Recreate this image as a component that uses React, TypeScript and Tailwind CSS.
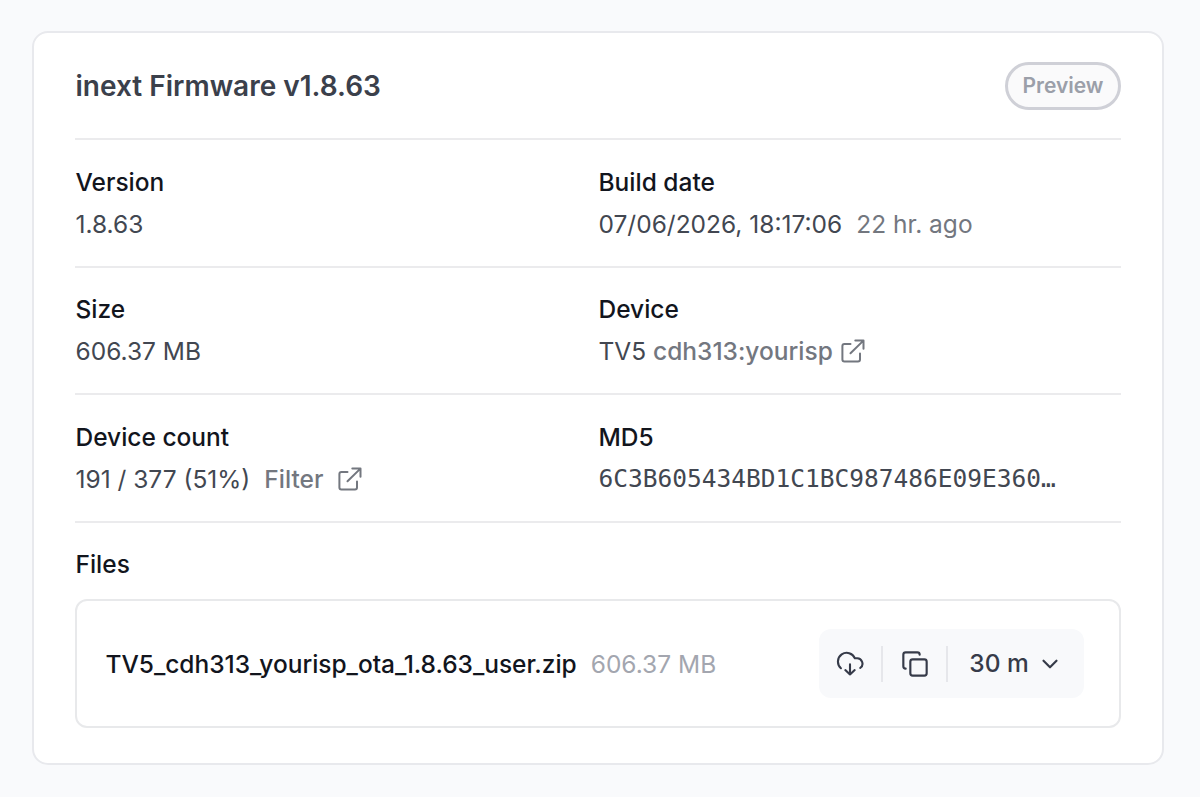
import type { ReactNode } from 'react'
import { ChevronDown, Copy } from 'lucide-react'

function ExternalLinkIcon({ className }: { className?: string }) {
  return (
    <svg
      className={className}
      viewBox="0 0 26 26"
      fill="none"
      stroke="currentColor"
      strokeWidth="2"
      strokeLinecap="round"
      strokeLinejoin="round"
    >
      <path d="M10.5 6H4.4a2 2 0 0 0-2 2v13.6a2 2 0 0 0 2 2H18a2 2 0 0 0 2-2v-6.1" />
      <path d="M10.5 15.2 23.4 2.6M15.3 2.5h8.2v8.2" />
    </svg>
  )
}

function CloudDownIcon({ className }: { className?: string }) {
  return (
    <svg
      className={className}
      viewBox="0 0 28 28"
      fill="none"
      stroke="currentColor"
      strokeWidth="2.1"
      strokeLinecap="round"
      strokeLinejoin="round"
    >
      <path d="M4.9 18.2A8.8 8.8 0 1 1 18.9 8.3h1.3A5.4 5.4 0 0 1 24.2 18" />
      <path d="M14 14.4v10M9.3 20.1l4.7 4.4 4.7-4.4" />
    </svg>
  )
}

function Field({ label, children }: { label: string; children: ReactNode }) {
  return (
    <div className="flex flex-col pl-[0.5px]">
      <dt className="h-[42px] font-medium leading-[36px] text-[#12151d]">{label}</dt>
      <dd className="flex h-[36px] items-center whitespace-pre leading-[36px] text-[#424751]">{children}</dd>
    </div>
  )
}

function Row({ children }: { children: ReactNode }) {
  return (
    <div className="grid h-[127.5px] grid-cols-2 border-t-2 border-[#ebebed] pt-[23.8px]">{children}</div>
  )
}

export default function App() {
  return (
    <main className="h-[797px] w-[1200px] bg-[#f9fafc] pl-8 pt-[31px] font-['Inter',sans-serif] text-[24.5px]">
      <section className="h-[734px] w-[1132px] rounded-2xl border-2 border-[#e8e9ed] bg-white pl-[41px] pr-[41px]">
        {/* Header */}
        <header className="flex h-[105px] items-center justify-between">
          <h1 className="pl-[0.5px] text-[28px] font-semibold leading-10 text-[#3b404b]">inext Firmware v1.8.63</h1>
          <span className="flex h-12 w-[116px] items-center justify-center rounded-full border-[3px] border-[#cfd0d7] bg-[#fafafb] text-[21px] font-semibold text-[#9b9fa9]">
            Preview
          </span>
        </header>

        {/* Details */}
        <dl>
          <Row>
            <Field label="Version">1.8.63</Field>
            <Field label="Build date">
              07/06/2026, 18:17:06<span className="ml-[14px] text-[#73777f]">22 hr. ago</span>
            </Field>
          </Row>
          <Row>
            <Field label="Size">606.37 MB</Field>
            <Field label="Device">
              TV5 <a className="font-medium text-[#73777f]">cdh313:yourisp</a>
              <ExternalLinkIcon className="ml-[7.5px] size-[26px] text-[#73777f]" />
            </Field>
          </Row>
          <Row>
            <Field label="Device count">
              191 / 377 (51%)<a className="ml-[14px] font-medium text-[#73777f]">Filter</a>
              <ExternalLinkIcon className="ml-[14px] size-[26px] text-[#73777f]" />
            </Field>
            <Field label="MD5">
              <span className="font-['DejaVu_Sans_Mono',monospace]">6C3B605434BD1C1BC987486E09E360…</span>
            </Field>
          </Row>
        </dl>

        {/* Files */}
        <div className="border-t-2 border-[#ebebed] pt-[23.5px]">
          <h2 className="pl-[0.5px] font-medium leading-[36px] text-[#12151d]">Files</h2>
          <div className="mt-[17px] flex h-[129px] items-center justify-between rounded-xl border-2 border-[#e8e9eb] pl-[28.5px] pr-[35px]">
            <div className="flex items-center pt-px">
              <span className="font-medium tracking-[-0.03px] text-[#12151d]">TV5_cdh313_yourisp_ota_1.8.63_user.zip</span>
              <span className="ml-[14px] text-[#a3a6af]">606.37 MB</span>
            </div>
            <div className="flex h-[69px] w-[265px] items-center rounded-xl bg-[#f8f9fb] text-[#363b49]">
              <button className="flex w-[62px] justify-center">
                <CloudDownIcon className="size-7" />
              </button>
              <div className="h-9 w-0.5 bg-[#e6e7eb]" />
              <button className="flex w-[63px] justify-center">
                <Copy className="size-[28px]" strokeWidth={1.85} />
              </button>
              <div className="h-9 w-0.5 bg-[#e6e7eb]" />
              <button className="flex flex-1 items-center justify-center font-medium">
                30 m
                <ChevronDown className="ml-2 size-[26px]" strokeWidth={2} />
              </button>
            </div>
          </div>
        </div>
      </section>
    </main>
  )
}
